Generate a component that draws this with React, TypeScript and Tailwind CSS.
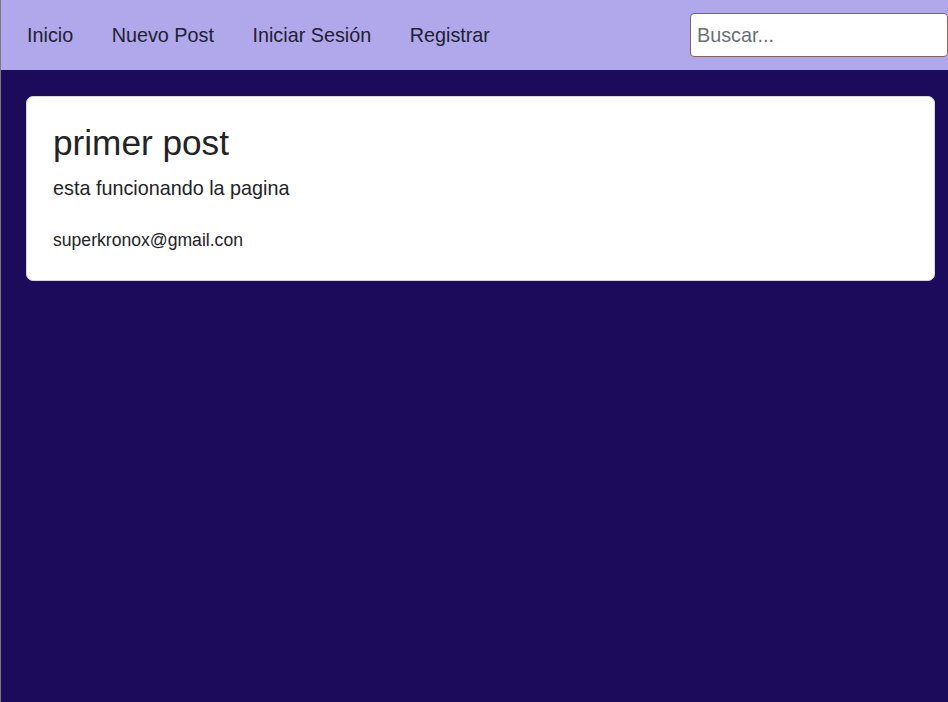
import React from "react";

const links = ["Inicio", "Nuevo Post", "Iniciar Sesión", "Registrar"];

export default function App() {
  return (
    <div
      className="min-h-[702px] bg-[#1c0a5a] border-l border-[#7a7a7a]"
      style={{ fontFamily: '"Liberation Sans", Arial, sans-serif' }}
    >
      {/* Navbar */}
      <nav className="h-[70px] bg-[#b0a8ea] flex items-center justify-between pl-[26px]">
        <ul className="flex items-center gap-[38.5px] pt-[2px]">
          {links.map((l) => (
            <li key={l}>
              <a href="#" className="text-[19.8px] text-[#222033]">
                {l}
              </a>
            </li>
          ))}
        </ul>
        <input
          type="text"
          placeholder="Buscar..."
          className="w-[258px] h-[44px] bg-white border border-[#8c5f5f] rounded-[4px] px-[6px] text-[19.8px] text-[#333] placeholder:text-[#6b7076] outline-none"
        />
      </nav>

      {/* Posts */}
      <main className="pl-[25px] pr-[13px] pt-[26px]">
        <div className="bg-white rounded-[7px] border border-[#d6d6de] px-[26px] pt-[25px] pb-[27px] text-[#222326]">
          <h2 className="text-[35.2px] leading-[42px]">primer post</h2>
          <p className="text-[19.8px] leading-[30px] mt-[9px]">esta funcionando la pagina</p>
          <p className="text-[17.6px] leading-[26px] mt-[24px]">superkronox@gmail.con</p>
        </div>
      </main>
    </div>
  );
}
